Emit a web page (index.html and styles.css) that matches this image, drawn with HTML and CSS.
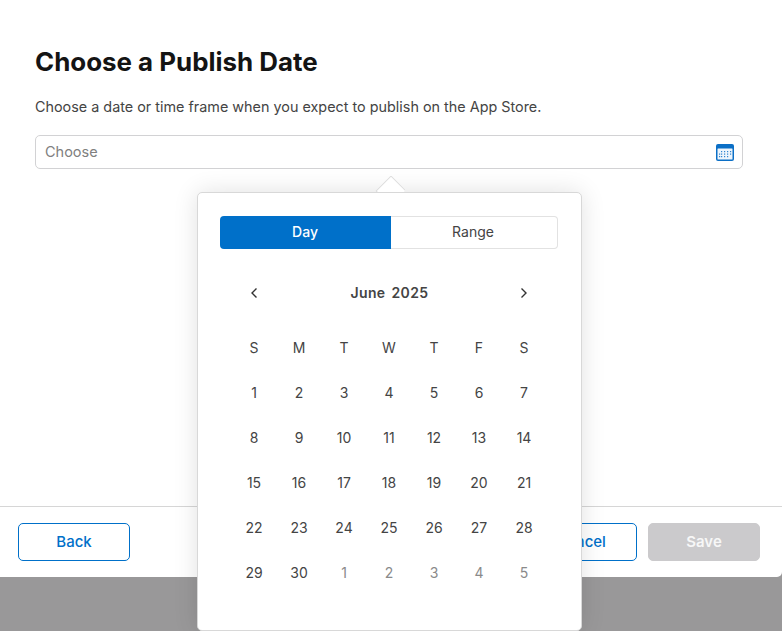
FILE: index.html
```html
<!DOCTYPE html>
<html lang="en">
<head>
<meta charset="utf-8">
<title>Choose a Publish Date</title>
<link rel="stylesheet" href="styles.css">
</head>
<body>
<div class="modal">
  <main class="content">
    <h1 class="title">Choose a Publish Date</h1>
    <p class="desc">Choose a date or time frame when you expect to publish on the App Store.</p>
    <div class="field">
      <span class="placeholder">Choose</span>
      <svg class="cal" width="18" height="17" viewBox="0 0 18 17">
        <rect x="0" y="0" width="18" height="17" rx="2" fill="#0b6fc6"/>
        <rect x="1.5" y="4.5" width="15" height="11" rx="0.5" fill="#eef5fc"/>
        <g fill="#2f84d0">
          <rect x="5" y="7" width="1.2" height="1.2"/><rect x="8" y="7" width="1.2" height="1.2"/><rect x="11" y="7" width="1.2" height="1.2"/><rect x="14" y="7" width="1.2" height="1.2"/>
          <rect x="3" y="9.5" width="1.2" height="1.2"/><rect x="5" y="9.5" width="1.2" height="1.2"/><rect x="8" y="9.5" width="1.2" height="1.2"/><rect x="11" y="9.5" width="1.2" height="1.2"/><rect x="14" y="9.5" width="1.2" height="1.2"/>
          <rect x="3" y="12" width="1.2" height="1.2"/><rect x="5" y="12" width="1.2" height="1.2"/><rect x="8" y="12" width="1.2" height="1.2"/><rect x="11" y="12" width="1.2" height="1.2"/>
        </g>
      </svg>
    </div>
  </main>
  <footer class="footer">
    <button class="btn">Back</button>
    <div class="footer-right">
      <button class="btn">Cancel</button>
      <button class="btn btn-disabled">Save</button>
    </div>
  </footer>
</div>

<div class="popover">
  <span class="arrow"></span>
  <div class="segments">
    <div class="seg seg-on">Day</div>
    <div class="seg seg-off">Range</div>
  </div>
  <div class="month">
    <svg class="chev" width="10" height="12" viewBox="0 0 10 12"><path d="M7.5 1.5 3 6l4.5 4.5" fill="none" stroke="#333" stroke-width="1.4"/></svg>
    <span class="month-name">June 2025</span>
    <svg class="chev" width="10" height="12" viewBox="0 0 10 12"><path d="M2.5 1.5 7 6l-4.5 4.5" fill="none" stroke="#333" stroke-width="1.4"/></svg>
  </div>
  <div class="grid">
    <span>S</span><span>M</span><span>T</span><span>W</span><span>T</span><span>F</span><span>S</span>
    <span>1</span><span>2</span><span>3</span><span>4</span><span>5</span><span>6</span><span>7</span>
    <span>8</span><span>9</span><span>10</span><span>11</span><span>12</span><span>13</span><span>14</span>
    <span>15</span><span>16</span><span>17</span><span>18</span><span>19</span><span>20</span><span>21</span>
    <span>22</span><span>23</span><span>24</span><span>25</span><span>26</span><span>27</span><span>28</span>
    <span>29</span><span>30</span><span class="out">1</span><span class="out">2</span><span class="out">3</span><span class="out">4</span><span class="out">5</span>
  </div>
</div>
</body>
</html>
```
FILE: styles.css
```css
* { box-sizing: border-box; }
html, body { margin: 0; height: 100%; }
body {
  background: #999899;
  font-family: Inter, "Liberation Sans", sans-serif;
  overflow: hidden;
  position: relative;
}
.modal {
  height: 577px;
  background: #fff;
  border-radius: 0 0 5px 0;
  display: flex;
  flex-direction: column;
}
.content {
  flex: 1;
  padding: 45px 39px 0 35px;
}
.title {
  margin: 0;
  font-size: 25.9px;
  line-height: 33px;
  font-weight: 700;
  color: #141414;
}
.desc {
  margin: 20px 0 0;
  font-size: 14.39px;
  line-height: 18px;
  color: #444;
}
.field {
  margin-top: 19px;
  height: 34px;
  border: 1px solid #d2d2d4;
  border-radius: 5px;
  display: flex;
  align-items: center;
  justify-content: space-between;
  padding: 0 8px 0 9px;
}
.placeholder { font-size: 14.5px; color: #808080; padding-bottom: 2px; }
.footer {
  height: 71px;
  border-top: 1px solid #d6d6d6;
  padding: 16px 22px 0 18px;
  display: flex;
  justify-content: space-between;
  align-items: flex-start;
}
.footer-right { display: flex; gap: 11px; }
.btn {
  width: 112px;
  height: 38px;
  padding: 0 0 2px;
  border: 1px solid #0070c9;
  border-radius: 5px;
  background: #fff;
  color: #0070c9;
  font: 500 15px Inter, "Liberation Sans", sans-serif;
}
.btn-disabled {
  background: #cbcacc;
  border-color: #cbcacc;
  color: #f7f7f7;
  font-weight: 600;
}
.popover {
  position: absolute;
  left: 197px;
  top: 192px;
  width: 385px;
  height: 439px;
  background: #fff;
  border: 1px solid #d8d8d8;
  border-radius: 5px;
  box-shadow: 0 0 24px rgba(0, 0, 0, 0.12);
  padding: 23px 23px 0 22px;
}
.arrow {
  position: absolute;
  left: 177px;
  top: -17px;
  width: 30px;
  height: 16px;
  overflow: hidden;
}
.arrow::before {
  content: "";
  position: absolute;
  left: 5px;
  top: 4px;
  width: 20px;
  height: 20px;
  background: #fff;
  border: 1px solid #dcdcdc;
  transform: rotate(45deg);
}
.segments {
  display: flex;
  height: 33px;
}
.seg {
  display: flex;
  align-items: center;
  justify-content: center;
  padding-bottom: 2px;
  font-size: 14px;
  color: #444;
}
.seg-on {
  flex: 0 0 171px;
  background: #0070c9;
  border-radius: 4px 0 0 4px;
  color: #fff;
  font-weight: 500;
  padding-right: 1px;
}
.seg-off {
  flex: 1;
  padding-right: 2px;
  border: 1px solid #e2e2e2;
  border-left: 0;
  border-radius: 0 4px 4px 0;
}
.month {
  margin-top: 33px;
  height: 22px;
  padding: 0 29px;
  display: flex;
  align-items: center;
  justify-content: space-between;
}
.month-name {
  padding-bottom: 2px;
  padding-left: 1px;
  font-size: 14px;
  font-weight: 600;
  letter-spacing: 0.4px;
  word-spacing: 2px;
  color: #444;
}
.grid {
  margin-top: 21px;
  margin-left: 11.5px;
  display: grid;
  grid-template-columns: repeat(7, 45px);
  grid-auto-rows: 45px;
  font-size: 14px;
  color: #444;
}
.grid span {
  display: flex;
  align-items: center;
  justify-content: center;
}
.grid .out { color: #8a8a8a; }
```
